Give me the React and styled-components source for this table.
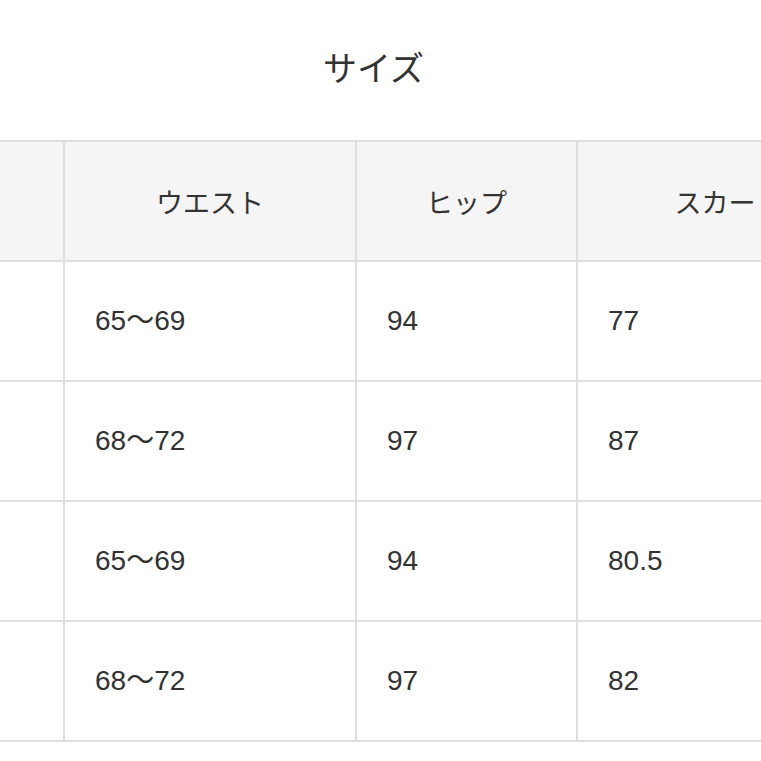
import styled, { createGlobalStyle } from "styled-components"

const GlobalStyle = createGlobalStyle`
  html, body {
    margin: 0;
    padding: 0;
    background: #ffffff;
    overflow: hidden;
  }
`

const rows = [
  { waist: "65〜69", hip: "94", skirt: "77" },
  { waist: "68〜72", hip: "97", skirt: "87" },
  { waist: "65〜69", hip: "94", skirt: "80.5" },
  { waist: "68〜72", hip: "97", skirt: "82" },
]

export default function App() {
  return (
    <Page>
      <GlobalStyle />
      <Title>サイズ</Title>
      <TableWrap>
        <SizeTable>
          <colgroup>
            <col style={{ width: 200 }} />
            <col style={{ width: 292 }} />
            <col style={{ width: 221 }} />
            <col style={{ width: 330 }} />
          </colgroup>
          <thead>
            <tr>
              <HeadCell></HeadCell>
              <HeadCell>ウエスト</HeadCell>
              <HeadCell>ヒップ</HeadCell>
              <HeadCell>スカート丈</HeadCell>
            </tr>
          </thead>
          <tbody>
            {rows.map((row, i) => (
              <tr key={i}>
                <Cell></Cell>
                <Cell>{row.waist}</Cell>
                <Cell>{row.hip}</Cell>
                <Cell>{row.skirt}</Cell>
              </tr>
            ))}
          </tbody>
        </SizeTable>
      </TableWrap>
    </Page>
  )
}

const Page = styled.div`
  width: 761px;
  height: 761px;
  overflow: hidden;
  font-family: "Liberation Sans", "Noto Sans CJK JP", sans-serif;
  color: #333333;
`

const Title = styled.h2`
  margin: 0;
  padding: 44px 14px 0 0;
  font-family: "Noto Sans CJK JP", sans-serif;
  font-size: 34px;
  line-height: 46px;
  font-weight: 400;
  text-align: center;
`

const TableWrap = styled.div`
  margin-top: 50px;
  margin-left: -137px;
`

const SizeTable = styled.table`
  table-layout: fixed;
  width: 1043px;
  border-collapse: collapse;
  font-size: 28px;
`

const HeadCell = styled.th`
  height: 118px;
  padding: 0;
  background: #f5f5f5;
  border: 2px solid #dedede;
  font-family: "Noto Sans CJK JP", sans-serif;
  font-size: 27px;
  font-weight: 400;
  text-align: center;
  white-space: nowrap;
`

const Cell = styled.td`
  height: 118px;
  padding: 0 0 0 30px;
  border: 2px solid #dedede;
  line-height: 1;
  text-align: left;
  white-space: nowrap;
`
